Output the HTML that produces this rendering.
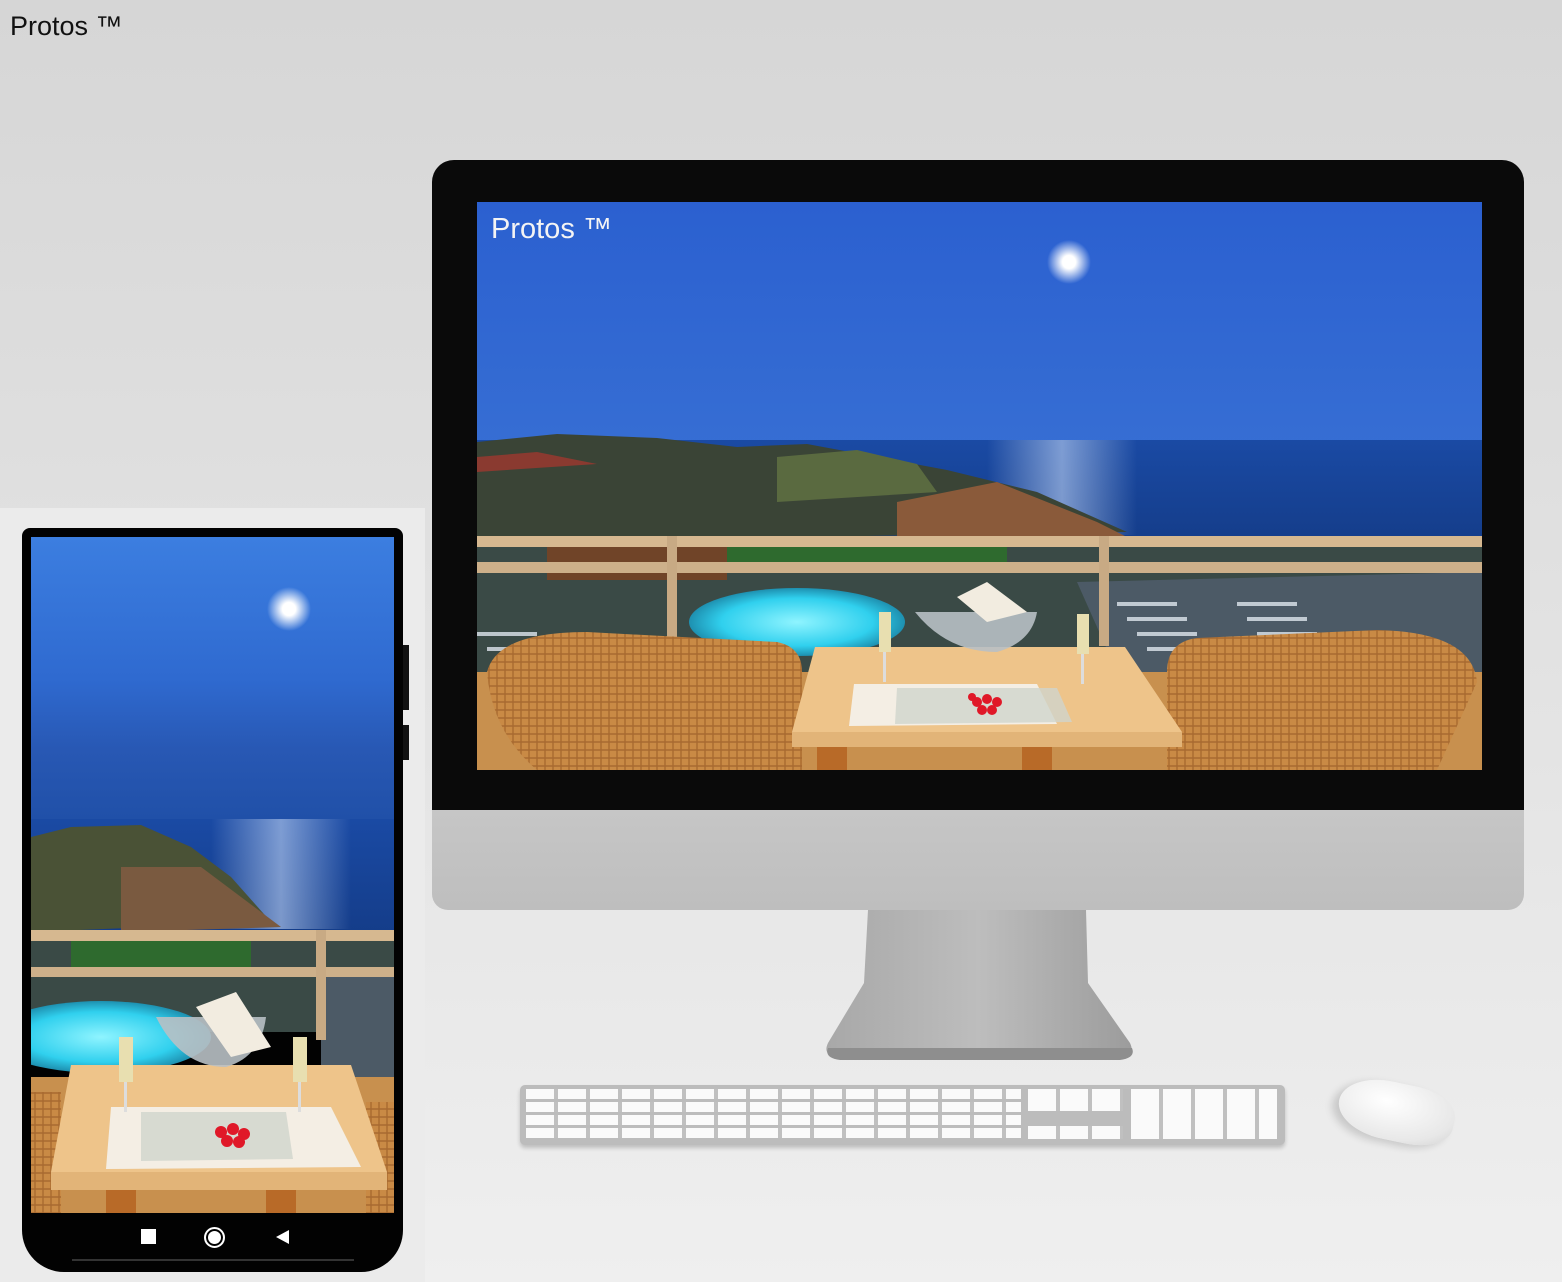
<!DOCTYPE html>
<html><head><meta charset="utf-8"><style>
*{margin:0;padding:0;box-sizing:border-box}
body{width:1562px;height:1282px;overflow:hidden;position:relative;font-family:"Liberation Sans",sans-serif;background:linear-gradient(180deg,#d6d6d6 0%,#e2e2e2 50%,#efefef 100%)}
.abs{position:absolute}
</style></head><body>
<div class="abs" style="left:10px;top:11px;font-size:27px;color:#111">Protos ™</div>

<!-- monitor -->
<div class="abs" style="left:432px;top:160px;width:1092px;height:660px;background:#0a0a0a;border-radius:22px 22px 0 0"></div>
<div class="abs" style="left:432px;top:810px;width:1092px;height:100px;background:linear-gradient(180deg,#c6c6c6,#bebebe);border-radius:0 0 16px 16px"></div>
<svg class="abs" style="left:820px;top:908px" width="320" height="155" viewBox="0 0 320 155">
<defs><linearGradient id="st" x1="0" x2="1"><stop offset="0" stop-color="#a8a8a8"/><stop offset=".5" stop-color="#bdbdbd"/><stop offset="1" stop-color="#9c9c9c"/></linearGradient></defs>
<path d="M48 2 H266 L268 75 L310 135 Q316 148 300 148 H18 Q2 148 8 135 L44 75 Z" fill="url(#st)"/>
<path d="M8 140 Q4 150 20 152 H300 Q316 150 312 140" fill="#8e8e8e"/>
</svg>
<!-- keyboard -->
<div class="abs" style="left:520px;top:1085px;width:765px;height:60px;background:#bcbcbc;border-radius:5px;box-shadow:0 3px 4px rgba(0,0,0,.2)"></div>
<div class="abs" style="left:526px;top:1089px;width:495px;height:50px;background:repeating-linear-gradient(90deg,#fafafa 0 28px,#c0c0c0 28px 32px);-webkit-mask:repeating-linear-gradient(180deg,#000 0 10px,transparent 10px 13px)"></div>
<div class="abs" style="left:1028px;top:1089px;width:95px;height:50px;background:repeating-linear-gradient(90deg,#fafafa 0 28px,#c0c0c0 28px 32px);-webkit-mask:linear-gradient(180deg,#000 0 22px,transparent 22px 37px,#000 37px)"></div>
<div class="abs" style="left:1131px;top:1089px;width:146px;height:50px;background:repeating-linear-gradient(90deg,#fafafa 0 28px,#c0c0c0 28px 32px)"></div>
<!-- mouse -->
<div class="abs" style="left:1338px;top:1083px;width:117px;height:58px;background:radial-gradient(ellipse at 40% 35%,#fff,#e8e8e8 70%,#cfcfcf);border-radius:50% 45% 45% 50%/60% 50% 50% 60%;transform:rotate(12deg);box-shadow:-6px 4px 8px rgba(0,0,0,.15)"></div>

<!-- monitor screen scene -->
<svg class="abs" style="left:477px;top:202px" width="1005" height="568" viewBox="0 0 1005 568">
<defs>
<linearGradient id="sky" x1="0" y1="0" x2="0" y2="1"><stop offset="0" stop-color="#2b60d0"/><stop offset=".5" stop-color="#3870d4"/><stop offset=".8" stop-color="#2c5cb4"/><stop offset="1" stop-color="#2050a8"/></linearGradient>
<linearGradient id="sea" x1="0" y1="0" x2="0" y2="1"><stop offset="0" stop-color="#1a4aa4"/><stop offset="1" stop-color="#143c88"/></linearGradient>
<radialGradient id="moon"><stop offset="0" stop-color="#fff"/><stop offset=".3" stop-color="#fff"/><stop offset="1" stop-color="#fff" stop-opacity="0"/></radialGradient>
<radialGradient id="pool"><stop offset="0" stop-color="#8ff4ff"/><stop offset=".7" stop-color="#30d0ee"/><stop offset="1" stop-color="#1e90b0"/></radialGradient>
<linearGradient id="refl" x1="0" y1="0" x2="1" y2="0"><stop offset="0" stop-color="#c0d4f4" stop-opacity="0"/><stop offset=".5" stop-color="#c0d4f4" stop-opacity=".6"/><stop offset="1" stop-color="#c0d4f4" stop-opacity="0"/></linearGradient>
<pattern id="wick" width="8" height="8" patternUnits="userSpaceOnUse"><rect width="8" height="8" fill="#c98a45"/><path d="M0 4h8M4 0v8" stroke="#a86a30" stroke-width="1.4"/></pattern>
</defs>
<rect width="1005" height="568" fill="url(#sky)"/>
<rect y="238" width="1005" height="110" fill="url(#sea)"/>
<rect x="510" y="238" width="150" height="95" fill="url(#refl)"/>
<circle cx="592" cy="60" r="22" fill="url(#moon)"/>
<path d="M0 240 L80 232 L180 236 L260 245 L330 242 L400 255 L470 268 L560 290 L650 330 L0 340 Z" fill="#3a4436"/>
<path d="M0 255 L60 250 L120 262 L0 270 Z" fill="#8a3a30"/>
<path d="M300 255 L380 248 L440 262 L460 290 L300 300 Z" fill="#5a6a40"/>
<path d="M420 300 L520 280 L620 320 L650 335 L420 340 Z" fill="#8a5a3a"/>
<rect y="340" width="1005" height="130" fill="#3a4a46"/>
<rect x="250" y="345" width="280" height="25" fill="#2e6a2e"/>
<rect x="70" y="338" width="180" height="40" fill="#704428"/>
<ellipse cx="320" cy="420" rx="108" ry="34" fill="url(#pool)"/>
<path d="M600 380 L1005 370 L1005 470 L640 470 Z" fill="#4c5a66"/>
<g fill="#dfe6ee" opacity=".8"><rect x="640" y="400" width="60" height="4"/><rect x="650" y="415" width="60" height="4"/><rect x="660" y="430" width="60" height="4"/><rect x="670" y="445" width="60" height="4"/><rect x="760" y="400" width="60" height="4"/><rect x="770" y="415" width="60" height="4"/><rect x="780" y="430" width="60" height="4"/><rect x="0" y="430" width="60" height="4"/><rect x="10" y="445" width="60" height="4"/></g>
<rect y="334" width="1005" height="11" fill="#d6b890"/>
<rect y="360" width="1005" height="11" fill="#cdb08a"/>
<rect x="190" y="334" width="10" height="110" fill="#c8aa84"/>
<rect x="622" y="334" width="10" height="110" fill="#c8aa84"/>
<rect y="470" width="1005" height="98" fill="#c8904e"/>
<path d="M10 470 Q20 430 110 430 L300 440 Q325 445 325 470 L325 568 L60 568 Q15 530 10 470 Z" fill="url(#wick)"/>
<path d="M690 470 Q690 440 720 436 L900 428 Q995 430 1000 480 L960 568 L690 568 Z" fill="url(#wick)"/>
<path d="M338 445 L648 445 L705 530 L315 530 Z" fill="#eec48a"/>
<rect x="315" y="530" width="390" height="15" fill="#e2b478"/>
<rect x="340" y="545" width="30" height="23" fill="#b86a28"/>
<rect x="545" y="545" width="30" height="23" fill="#b86a28"/>
<path d="M377 482 L560 482 L580 522 L372 524 Z" fill="#f4eee4"/>
<path d="M420 486 L580 486 L595 520 L418 522 Z" fill="#cfd4cc" opacity=".8"/>
<g fill="#e01828"><circle cx="500" cy="500" r="5"/><circle cx="510" cy="497" r="5"/><circle cx="520" cy="500" r="5"/><circle cx="505" cy="508" r="5"/><circle cx="515" cy="508" r="5"/><circle cx="495" cy="495" r="4"/></g>
<path d="M438 410 Q470 450 520 450 Q555 440 560 410 Z" fill="#b8c0c4" opacity=".9"/>
<path d="M480 395 L510 380 L550 410 L510 420 Z" fill="#f2ece0"/>
<rect x="402" y="410" width="12" height="40" fill="#e8dfb0"/><rect x="406" y="450" width="3" height="30" fill="#ddd"/>
<rect x="600" y="412" width="12" height="40" fill="#e8dfb0"/><rect x="604" y="452" width="3" height="30" fill="#ddd"/>
<text x="14" y="36" font-family="Liberation Sans,sans-serif" font-size="29" fill="#f4f4f4">Protos ™</text>
</svg>

<!-- phone panel -->
<div class="abs" style="left:0;top:508px;width:425px;height:774px;background:#ebebeb"></div>
<div class="abs" style="left:22px;top:528px;width:381px;height:744px;background:#020202;border-radius:8px 8px 42px 42px"></div>
<div class="abs" style="left:403px;top:645px;width:6px;height:65px;background:#111"></div>
<div class="abs" style="left:403px;top:725px;width:6px;height:35px;background:#111"></div>
<svg class="abs" style="left:31px;top:537px" width="363" height="676" viewBox="0 0 363 676">
<defs>
<linearGradient id="psky" x1="0" y1="0" x2="0" y2="1"><stop offset="0" stop-color="#3c7ee0"/><stop offset=".5" stop-color="#2f6ad0"/><stop offset=".75" stop-color="#2858b4"/><stop offset="1" stop-color="#2050a8"/></linearGradient>
</defs>
<rect width="363" height="283" fill="url(#psky)"/>
<rect y="282" width="363" height="120" fill="url(#sea)"/>
<rect x="180" y="282" width="140" height="110" fill="url(#refl)"/>
<circle cx="258" cy="72" r="22" fill="url(#moon)"/>
<path d="M0 300 L40 290 L110 288 L160 310 L200 340 L240 385 L0 395 Z" fill="#4a5236"/>
<path d="M90 330 L170 330 L250 390 L90 395 Z" fill="#7a5a40"/>
<rect y="395" width="363" height="100" fill="#3a4a46"/>
<rect x="40" y="400" width="180" height="30" fill="#2e6a2e"/>
<ellipse cx="70" cy="500" rx="110" ry="36" fill="url(#pool)"/>
<path d="M290 440 L363 440 L363 560 L290 560 Z" fill="#4c5a66"/>
<rect y="393" width="363" height="11" fill="#d6b890"/>
<rect y="430" width="363" height="10" fill="#cdb08a"/>
<rect x="285" y="393" width="10" height="110" fill="#c8aa84"/>
<rect y="540" width="363" height="136" fill="#c8904e"/>
<rect x="0" y="555" width="30" height="121" fill="url(#wick)"/>
<rect x="335" y="565" width="28" height="111" fill="url(#wick)"/>
<path d="M40 528 L320 528 L356 635 L20 635 Z" fill="#eec48a"/>
<rect x="20" y="635" width="336" height="18" fill="#e2b478"/>
<rect x="75" y="653" width="30" height="23" fill="#b86a28"/>
<rect x="235" y="653" width="30" height="23" fill="#b86a28"/>
<path d="M80 570 L300 570 L330 630 L75 632 Z" fill="#f4eee4"/>
<path d="M110 575 L255 575 L262 622 L110 624 Z" fill="#cfd4cc" opacity=".8"/>
<g fill="#e01828"><circle cx="190" cy="595" r="6"/><circle cx="202" cy="592" r="6"/><circle cx="213" cy="597" r="6"/><circle cx="196" cy="604" r="6"/><circle cx="208" cy="605" r="6"/></g>
<path d="M125 480 Q150 530 195 530 Q230 520 235 480 Z" fill="#b8c0c4" opacity=".9"/>
<path d="M165 470 L205 455 L240 510 L200 520 Z" fill="#f2ece0"/>
<rect x="88" y="500" width="14" height="45" fill="#e8dfb0"/><rect x="93" y="545" width="3" height="30" fill="#ddd"/>
<rect x="262" y="500" width="14" height="45" fill="#e8dfb0"/><rect x="267" y="545" width="3" height="30" fill="#ddd"/>
</svg>
<div class="abs" style="left:141px;top:1229px;width:15px;height:15px;background:#fff"></div>
<div class="abs" style="left:204px;top:1227px;width:21px;height:21px;border-radius:50%;border:2px solid #fff;box-shadow:inset 0 0 0 2px #000,inset 0 0 0 10px #fff"></div>
<svg class="abs" style="left:276px;top:1230px" width="14" height="14"><path d="M0 7 L13 0 V14 Z" fill="#fff"/></svg>
<div class="abs" style="left:72px;top:1259px;width:282px;height:2px;background:#333"></div>
</body></html>
